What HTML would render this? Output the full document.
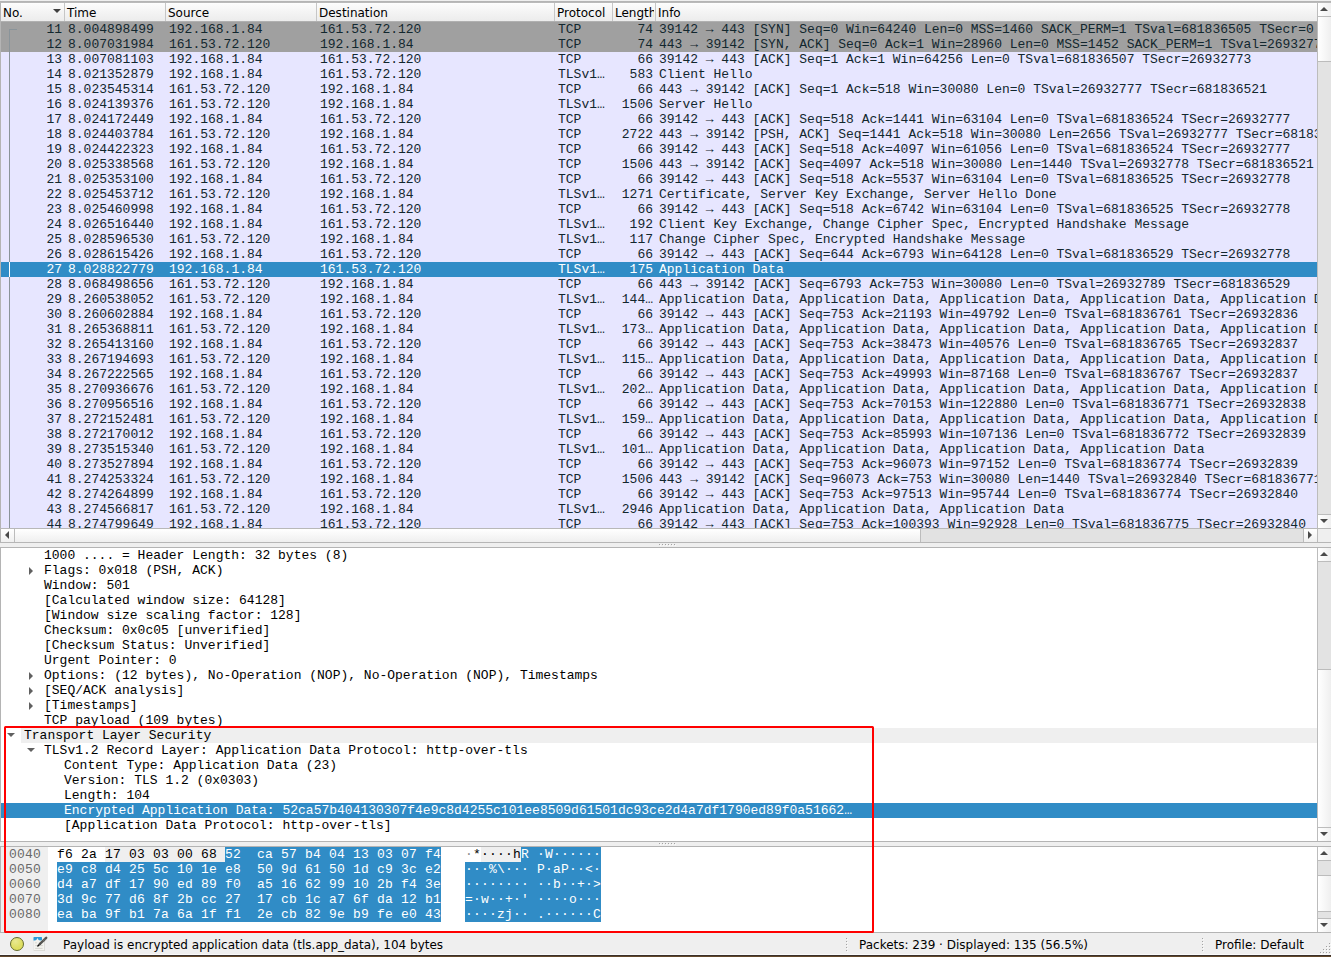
<!DOCTYPE html>
<html lang="en"><head><meta charset="utf-8"><title>Wireshark</title>
<style>
html,body{margin:0;padding:0;}
body{width:1331px;height:957px;overflow:hidden;background:#efefef;}
#app{position:relative;width:1331px;height:957px;overflow:hidden;background:#efefef;font-family:"Liberation Mono","DejaVu Sans Mono",monospace;font-size:13px;line-height:15px;color:#000;}
#app div,#app span,#app i,#app b,#app em{box-sizing:border-box;}
i,b,em{font-style:normal;font-weight:normal;}
/* packet list */
#plist{position:absolute;left:0;top:0;width:1331px;height:543px;}
#plist:before{content:"";position:absolute;left:0;top:1px;width:1331px;height:2px;background:linear-gradient(#b2b2b2,#bcbcbc);}
#plist:after{content:"";position:absolute;left:0;top:542px;width:1331px;height:1px;background:#b6b6b6;}
#pl_l{position:absolute;left:0;top:3px;width:1px;height:540px;background:#b4b4b4;}
#pl_b{position:absolute;left:0;top:528px;width:1331px;height:1px;background:#b8b8b8;}
#phead{position:absolute;left:0;top:3px;width:1318px;height:19px;border-left:1px solid #b4b4b4;border-bottom:1px solid #b0b0b0;border-right:1px solid #b8b8b8;background:#c6c6c6;font-family:"DejaVu Sans","Liberation Sans",sans-serif;font-size:12px;}
.hc{position:absolute;top:0;height:18px;background:linear-gradient(#ffffff 0,#fbfbfb 1px,#ececec 100%);border-right:0;overflow:hidden;white-space:nowrap;}
.hc:after{content:"";position:absolute;right:0;top:0;width:0;height:18px;}
.hc span{position:absolute;left:2px;top:2px;line-height:16px;color:#000;}
#phead .hc{box-shadow:none;}
.sortarrow{position:absolute;left:52px;top:6px;width:0;height:0;border-left:4px solid transparent;border-right:4px solid transparent;border-top:4.5px solid #404040;}
.fade{position:absolute;right:0;top:0;width:8px;height:18px;background:linear-gradient(90deg,rgba(245,245,245,0),rgba(245,245,245,1));}
#prows{position:absolute;left:0;top:22px;width:1318px;height:506px;overflow:hidden;border-left:1px solid #b4b4b4;border-right:1px solid #b8b8b8;background:#e7e6ff;}
.pr{position:absolute;left:0;width:1316px;height:15px;background:#e7e6ff;color:#12272e;white-space:pre;overflow:hidden;}
.pr.g{background:#a0a0a0;}
.pr.s{background:#308cc6;color:#fff;}
.pr span{position:absolute;top:0;height:15px;line-height:15px;overflow:hidden;}
.c1{left:0;width:61px;text-align:right;}
.c2{left:67px;}
.c3{left:168px;}
.c4{left:319px;}
.c5{left:557px;}
.c6{left:612px;width:40px;text-align:right;}
.c7{left:658px;width:658px;letter-spacing:-0.007px;}
#rel1{position:absolute;left:8px;top:7px;width:1px;height:500px;background:#8a949a;}
#rel2{position:absolute;left:8px;top:7px;width:8px;height:1px;background:#8a949a;}
#rel3{position:absolute;left:8px;top:240px;width:1px;height:15px;background:#fff;}
/* scrollbars */
.vsb{position:absolute;left:1317px;width:14px;border-left:1px solid #bcbcbc;background:#e3e3e3;}
.vsb div{position:absolute;left:0;width:13px;}
.vsb .btn{background:linear-gradient(90deg,#ffffff,#f0f0f0);}
.vsb .handle{background:linear-gradient(90deg,#ffffff,#efefef);}
.vsb .hl{height:1px;background:#bcbcbc;}
.au,.ad,.al,.ar{position:absolute;width:0;height:0;}
.au{left:2px;top:4px;border-left:4.5px solid transparent;border-right:4.5px solid transparent;border-bottom:4.5px solid #4a4a4a;}
.ad{left:2px;top:4px;border-left:4.5px solid transparent;border-right:4.5px solid transparent;border-top:4.5px solid #4a4a4a;}
.al{left:4px;top:2px;border-top:4.5px solid transparent;border-bottom:4.5px solid transparent;border-right:4.5px solid #4a4a4a;}
.ar{left:4px;top:2px;border-top:4.5px solid transparent;border-bottom:4.5px solid transparent;border-left:4.5px solid #4a4a4a;}
.hsb{position:absolute;height:13px;background:#e2e2e2;}
.hsb div{position:absolute;top:0;height:13px;}
.hsb .btnh{background:linear-gradient(#ffffff,#f0f0f0);}
.hsb .handleh{background:linear-gradient(#ffffff,#efefef);}
.hsb .vl{width:1px;background:#bcbcbc;}
.corner{position:absolute;background:#efefef;border-left:1px solid #bcbcbc;}
.grip{position:absolute;width:18px;height:2px;background-image:linear-gradient(90deg,#a2a2a2 1px,transparent 1px),linear-gradient(90deg,transparent 1px,#fbfbfb 1px,#fbfbfb 2px,transparent 2px);background-size:3px 1px,3px 1px;background-position:0 0,0 1px;background-repeat:repeat-x;}
/* details */
#dpane{position:absolute;left:0;top:547px;width:1331px;height:295px;border:1px solid #b4b4b4;border-right:0;background:#fff;}
#drows{position:absolute;left:0;top:0;width:1316px;height:293px;overflow:hidden;}
.dr{position:absolute;left:0;width:1316px;height:15px;white-space:pre;}
.dr span{position:absolute;top:0;line-height:15px;}
.dr.sel{background:#308cc6;color:#fff;}
.bgtop{position:absolute;left:20px;top:0;width:1296px;height:15px;background:#efefef;}
.tr{position:absolute;top:3.5px;width:0;height:0;border-top:4px solid transparent;border-bottom:4px solid transparent;border-left:4.5px solid #606060;}
.td{position:absolute;top:5px;width:0;height:0;border-left:4px solid transparent;border-right:4px solid transparent;border-top:4.5px solid #606060;}
/* hex */
#hpane{position:absolute;left:0;top:846px;width:1331px;height:87px;border:1px solid #b4b4b4;border-right:0;background:#fff;}
#hoff{position:absolute;left:0;top:0;width:47px;height:85px;background:#efefef;}
.hr{position:absolute;left:0;width:1316px;height:15px;white-space:pre;letter-spacing:0.2px;}
.hr span{position:absolute;top:0;line-height:15px;height:15px;}
.ho{left:8px;color:#6a6a6a;}
.dim{color:#8c8c8c;}
.hx{left:56px;}
.ha{left:464px;}
.hs{background:#308cc6;color:#fff;display:inline-block;height:15px;}
.pl,.pa{background:#efefef;display:inline-block;height:15px;}
/* red box */
#redbox{position:absolute;left:4px;top:726px;width:870px;height:207px;border:2px solid #ff0000;border-radius:1.5px;}
/* status bar */
#status{position:absolute;left:0;top:933px;width:1331px;height:21px;background:#efefef;font-family:"DejaVu Sans","Liberation Sans",sans-serif;font-size:12px;color:#000;}
#status span{position:absolute;top:4px;line-height:16px;white-space:nowrap;}
#led{position:absolute;left:10px;top:4px;width:14px;height:14px;border-radius:50%;border:1px solid #636b2a;background:radial-gradient(circle at 38% 28%,#e9e992,#dede62 60%,#e0e058);}
#edicon{position:absolute;left:30px;top:1px;}
#st1{left:63px;}
#st2{left:859px;}
#st3{left:1215px;}
.vdots{position:absolute;top:5px;width:2px;height:15px;background-image:linear-gradient(#a4a4a4 1px,transparent 1px),linear-gradient(#fbfbfb 1px,transparent 1px);background-size:1px 3px,1px 3px;background-position:0 0,1px 1px;background-repeat:repeat-y;}
#sizegrip{position:absolute;left:1318px;top:9px;}
#bottom1{position:absolute;left:0;top:954px;width:1331px;height:1px;background:#fafafa;}
#bottom2{position:absolute;left:0;top:955px;width:1331px;height:2px;background:linear-gradient(#3a302b 50%,#63482a 50%);}

</style></head>
<body>
<div id="app">
<div id="plist">
<div id="phead"><div class="hc" style="left:0px;width:63px"><span>No.</span><i class="sortarrow"></i></div><div class="hc" style="left:64px;width:100px"><span>Time</span></div><div class="hc" style="left:165px;width:150px"><span>Source</span></div><div class="hc" style="left:316px;width:237px"><span>Destination</span></div><div class="hc" style="left:554px;width:57px"><span>Protocol</span></div><div class="hc" style="left:612px;width:42px"><span style="width:39px;overflow:hidden">Length</span></div><div class="hc last" style="left:655px;width:661px"><span>Info</span></div></div>
<div id="prows">
<div class="pr g" style="top:0px"><span class="c1">11</span><span class="c2">8.004898499</span><span class="c3">192.168.1.84</span><span class="c4">161.53.72.120</span><span class="c5">TCP</span><span class="c6">74</span><span class="c7">39142 → 443 [SYN] Seq=0 Win=64240 Len=0 MSS=1460 SACK_PERM=1 TSval=681836505 TSecr=0 WS=128</span></div>
<div class="pr g" style="top:15px"><span class="c1">12</span><span class="c2">8.007031984</span><span class="c3">161.53.72.120</span><span class="c4">192.168.1.84</span><span class="c5">TCP</span><span class="c6">74</span><span class="c7">443 → 39142 [SYN, ACK] Seq=0 Ack=1 Win=28960 Len=0 MSS=1452 SACK_PERM=1 TSval=26932773 TSecr=681836505 WS=128</span></div>
<div class="pr " style="top:30px"><span class="c1">13</span><span class="c2">8.007081103</span><span class="c3">192.168.1.84</span><span class="c4">161.53.72.120</span><span class="c5">TCP</span><span class="c6">66</span><span class="c7">39142 → 443 [ACK] Seq=1 Ack=1 Win=64256 Len=0 TSval=681836507 TSecr=26932773</span></div>
<div class="pr " style="top:45px"><span class="c1">14</span><span class="c2">8.021352879</span><span class="c3">192.168.1.84</span><span class="c4">161.53.72.120</span><span class="c5">TLSv1…</span><span class="c6">583</span><span class="c7">Client Hello</span></div>
<div class="pr " style="top:60px"><span class="c1">15</span><span class="c2">8.023545314</span><span class="c3">161.53.72.120</span><span class="c4">192.168.1.84</span><span class="c5">TCP</span><span class="c6">66</span><span class="c7">443 → 39142 [ACK] Seq=1 Ack=518 Win=30080 Len=0 TSval=26932777 TSecr=681836521</span></div>
<div class="pr " style="top:75px"><span class="c1">16</span><span class="c2">8.024139376</span><span class="c3">161.53.72.120</span><span class="c4">192.168.1.84</span><span class="c5">TLSv1…</span><span class="c6">1506</span><span class="c7">Server Hello</span></div>
<div class="pr " style="top:90px"><span class="c1">17</span><span class="c2">8.024172449</span><span class="c3">192.168.1.84</span><span class="c4">161.53.72.120</span><span class="c5">TCP</span><span class="c6">66</span><span class="c7">39142 → 443 [ACK] Seq=518 Ack=1441 Win=63104 Len=0 TSval=681836524 TSecr=26932777</span></div>
<div class="pr " style="top:105px"><span class="c1">18</span><span class="c2">8.024403784</span><span class="c3">161.53.72.120</span><span class="c4">192.168.1.84</span><span class="c5">TCP</span><span class="c6">2722</span><span class="c7">443 → 39142 [PSH, ACK] Seq=1441 Ack=518 Win=30080 Len=2656 TSval=26932777 TSecr=681836524 [TCP segment of a reassembled PDU]</span></div>
<div class="pr " style="top:120px"><span class="c1">19</span><span class="c2">8.024422323</span><span class="c3">192.168.1.84</span><span class="c4">161.53.72.120</span><span class="c5">TCP</span><span class="c6">66</span><span class="c7">39142 → 443 [ACK] Seq=518 Ack=4097 Win=61056 Len=0 TSval=681836524 TSecr=26932777</span></div>
<div class="pr " style="top:135px"><span class="c1">20</span><span class="c2">8.025338568</span><span class="c3">161.53.72.120</span><span class="c4">192.168.1.84</span><span class="c5">TCP</span><span class="c6">1506</span><span class="c7">443 → 39142 [ACK] Seq=4097 Ack=518 Win=30080 Len=1440 TSval=26932778 TSecr=681836521 [TCP segment of a reassembled PDU]</span></div>
<div class="pr " style="top:150px"><span class="c1">21</span><span class="c2">8.025353100</span><span class="c3">192.168.1.84</span><span class="c4">161.53.72.120</span><span class="c5">TCP</span><span class="c6">66</span><span class="c7">39142 → 443 [ACK] Seq=518 Ack=5537 Win=63104 Len=0 TSval=681836525 TSecr=26932778</span></div>
<div class="pr " style="top:165px"><span class="c1">22</span><span class="c2">8.025453712</span><span class="c3">161.53.72.120</span><span class="c4">192.168.1.84</span><span class="c5">TLSv1…</span><span class="c6">1271</span><span class="c7">Certificate, Server Key Exchange, Server Hello Done</span></div>
<div class="pr " style="top:180px"><span class="c1">23</span><span class="c2">8.025460998</span><span class="c3">192.168.1.84</span><span class="c4">161.53.72.120</span><span class="c5">TCP</span><span class="c6">66</span><span class="c7">39142 → 443 [ACK] Seq=518 Ack=6742 Win=63104 Len=0 TSval=681836525 TSecr=26932778</span></div>
<div class="pr " style="top:195px"><span class="c1">24</span><span class="c2">8.026516440</span><span class="c3">192.168.1.84</span><span class="c4">161.53.72.120</span><span class="c5">TLSv1…</span><span class="c6">192</span><span class="c7">Client Key Exchange, Change Cipher Spec, Encrypted Handshake Message</span></div>
<div class="pr " style="top:210px"><span class="c1">25</span><span class="c2">8.028596530</span><span class="c3">161.53.72.120</span><span class="c4">192.168.1.84</span><span class="c5">TLSv1…</span><span class="c6">117</span><span class="c7">Change Cipher Spec, Encrypted Handshake Message</span></div>
<div class="pr " style="top:225px"><span class="c1">26</span><span class="c2">8.028615426</span><span class="c3">192.168.1.84</span><span class="c4">161.53.72.120</span><span class="c5">TCP</span><span class="c6">66</span><span class="c7">39142 → 443 [ACK] Seq=644 Ack=6793 Win=64128 Len=0 TSval=681836529 TSecr=26932778</span></div>
<div class="pr s" style="top:240px"><span class="c1">27</span><span class="c2">8.028822779</span><span class="c3">192.168.1.84</span><span class="c4">161.53.72.120</span><span class="c5">TLSv1…</span><span class="c6">175</span><span class="c7">Application Data</span></div>
<div class="pr " style="top:255px"><span class="c1">28</span><span class="c2">8.068498656</span><span class="c3">161.53.72.120</span><span class="c4">192.168.1.84</span><span class="c5">TCP</span><span class="c6">66</span><span class="c7">443 → 39142 [ACK] Seq=6793 Ack=753 Win=30080 Len=0 TSval=26932789 TSecr=681836529</span></div>
<div class="pr " style="top:270px"><span class="c1">29</span><span class="c2">8.260538052</span><span class="c3">161.53.72.120</span><span class="c4">192.168.1.84</span><span class="c5">TLSv1…</span><span class="c6">144…</span><span class="c7">Application Data, Application Data, Application Data, Application Data, Application Data, Application Data</span></div>
<div class="pr " style="top:285px"><span class="c1">30</span><span class="c2">8.260602884</span><span class="c3">192.168.1.84</span><span class="c4">161.53.72.120</span><span class="c5">TCP</span><span class="c6">66</span><span class="c7">39142 → 443 [ACK] Seq=753 Ack=21193 Win=49792 Len=0 TSval=681836761 TSecr=26932836</span></div>
<div class="pr " style="top:300px"><span class="c1">31</span><span class="c2">8.265368811</span><span class="c3">161.53.72.120</span><span class="c4">192.168.1.84</span><span class="c5">TLSv1…</span><span class="c6">173…</span><span class="c7">Application Data, Application Data, Application Data, Application Data, Application Data, Application Data</span></div>
<div class="pr " style="top:315px"><span class="c1">32</span><span class="c2">8.265413160</span><span class="c3">192.168.1.84</span><span class="c4">161.53.72.120</span><span class="c5">TCP</span><span class="c6">66</span><span class="c7">39142 → 443 [ACK] Seq=753 Ack=38473 Win=40576 Len=0 TSval=681836765 TSecr=26932837</span></div>
<div class="pr " style="top:330px"><span class="c1">33</span><span class="c2">8.267194693</span><span class="c3">161.53.72.120</span><span class="c4">192.168.1.84</span><span class="c5">TLSv1…</span><span class="c6">115…</span><span class="c7">Application Data, Application Data, Application Data, Application Data, Application Data, Application Data</span></div>
<div class="pr " style="top:345px"><span class="c1">34</span><span class="c2">8.267222565</span><span class="c3">192.168.1.84</span><span class="c4">161.53.72.120</span><span class="c5">TCP</span><span class="c6">66</span><span class="c7">39142 → 443 [ACK] Seq=753 Ack=49993 Win=87168 Len=0 TSval=681836767 TSecr=26932837</span></div>
<div class="pr " style="top:360px"><span class="c1">35</span><span class="c2">8.270936676</span><span class="c3">161.53.72.120</span><span class="c4">192.168.1.84</span><span class="c5">TLSv1…</span><span class="c6">202…</span><span class="c7">Application Data, Application Data, Application Data, Application Data, Application Data, Application Data</span></div>
<div class="pr " style="top:375px"><span class="c1">36</span><span class="c2">8.270956516</span><span class="c3">192.168.1.84</span><span class="c4">161.53.72.120</span><span class="c5">TCP</span><span class="c6">66</span><span class="c7">39142 → 443 [ACK] Seq=753 Ack=70153 Win=122880 Len=0 TSval=681836771 TSecr=26932838</span></div>
<div class="pr " style="top:390px"><span class="c1">37</span><span class="c2">8.272152481</span><span class="c3">161.53.72.120</span><span class="c4">192.168.1.84</span><span class="c5">TLSv1…</span><span class="c6">159…</span><span class="c7">Application Data, Application Data, Application Data, Application Data, Application Data, Application Data</span></div>
<div class="pr " style="top:405px"><span class="c1">38</span><span class="c2">8.272170012</span><span class="c3">192.168.1.84</span><span class="c4">161.53.72.120</span><span class="c5">TCP</span><span class="c6">66</span><span class="c7">39142 → 443 [ACK] Seq=753 Ack=85993 Win=107136 Len=0 TSval=681836772 TSecr=26932839</span></div>
<div class="pr " style="top:420px"><span class="c1">39</span><span class="c2">8.273515340</span><span class="c3">161.53.72.120</span><span class="c4">192.168.1.84</span><span class="c5">TLSv1…</span><span class="c6">101…</span><span class="c7">Application Data, Application Data, Application Data, Application Data</span></div>
<div class="pr " style="top:435px"><span class="c1">40</span><span class="c2">8.273527894</span><span class="c3">192.168.1.84</span><span class="c4">161.53.72.120</span><span class="c5">TCP</span><span class="c6">66</span><span class="c7">39142 → 443 [ACK] Seq=753 Ack=96073 Win=97152 Len=0 TSval=681836774 TSecr=26932839</span></div>
<div class="pr " style="top:450px"><span class="c1">41</span><span class="c2">8.274253324</span><span class="c3">161.53.72.120</span><span class="c4">192.168.1.84</span><span class="c5">TCP</span><span class="c6">1506</span><span class="c7">443 → 39142 [ACK] Seq=96073 Ack=753 Win=30080 Len=1440 TSval=26932840 TSecr=681836771 [TCP segment of a reassembled PDU]</span></div>
<div class="pr " style="top:465px"><span class="c1">42</span><span class="c2">8.274264899</span><span class="c3">192.168.1.84</span><span class="c4">161.53.72.120</span><span class="c5">TCP</span><span class="c6">66</span><span class="c7">39142 → 443 [ACK] Seq=753 Ack=97513 Win=95744 Len=0 TSval=681836774 TSecr=26932840</span></div>
<div class="pr " style="top:480px"><span class="c1">43</span><span class="c2">8.274566817</span><span class="c3">161.53.72.120</span><span class="c4">192.168.1.84</span><span class="c5">TLSv1…</span><span class="c6">2946</span><span class="c7">Application Data, Application Data, Application Data</span></div>
<div class="pr " style="top:495px"><span class="c1">44</span><span class="c2">8.274799649</span><span class="c3">192.168.1.84</span><span class="c4">161.53.72.120</span><span class="c5">TCP</span><span class="c6">66</span><span class="c7">39142 → 443 [ACK] Seq=753 Ack=100393 Win=92928 Len=0 TSval=681836775 TSecr=26932840</span></div>
<div id="rel1"></div><div id="rel2"></div><div id="rel3"></div>
</div>
<div class="vsb" style="top:3px;height:525px"><div class="btn" style="top:0;height:13px"><i class="au"></i></div><div class="hl" style="top:13px"></div><div class="handle" style="top:14px;height:44px"></div><div class="hl" style="top:58px"></div><div class="hl" style="top:511px"></div><div class="btn" style="top:512px;height:13px"><i class="ad"></i></div></div>
<div class="hsb" style="top:529px;left:1px;width:1316px"><div class="btnh" style="left:0;width:13px"><i class="al"></i></div><div class="vl" style="left:13px"></div><div class="handleh" style="left:14px;width:905px"></div><div class="vl" style="left:919px"></div><div class="vl" style="left:1302px"></div><div class="btnh" style="left:1303px;width:13px"><i class="ar"></i></div></div>
<div id="pl_l"></div><div id="pl_b"></div><div class="corner" style="top:529px;left:1317px;width:14px;height:13px"></div>
</div>
<div class="grip" style="top:544px;left:659px"></div>
<div id="dpane">
<div id="drows">
<div class="dr " style="top:0px"><span style="left:43px">1000 .... = Header Length: 32 bytes (8)</span></div>
<div class="dr " style="top:15px"><i class="tr" style="left:28px"></i><span style="left:43px">Flags: 0x018 (PSH, ACK)</span></div>
<div class="dr " style="top:30px"><span style="left:43px">Window: 501</span></div>
<div class="dr " style="top:45px"><span style="left:43px">[Calculated window size: 64128]</span></div>
<div class="dr " style="top:60px"><span style="left:43px">[Window size scaling factor: 128]</span></div>
<div class="dr " style="top:75px"><span style="left:43px">Checksum: 0x0c05 [unverified]</span></div>
<div class="dr " style="top:90px"><span style="left:43px">[Checksum Status: Unverified]</span></div>
<div class="dr " style="top:105px"><span style="left:43px">Urgent Pointer: 0</span></div>
<div class="dr " style="top:120px"><i class="tr" style="left:28px"></i><span style="left:43px">Options: (12 bytes), No-Operation (NOP), No-Operation (NOP), Timestamps</span></div>
<div class="dr " style="top:135px"><i class="tr" style="left:28px"></i><span style="left:43px">[SEQ/ACK analysis]</span></div>
<div class="dr " style="top:150px"><i class="tr" style="left:28px"></i><span style="left:43px">[Timestamps]</span></div>
<div class="dr " style="top:165px"><span style="left:43px">TCP payload (109 bytes)</span></div>
<div class="dr top" style="top:180px"><b class="bgtop"></b><i class="td" style="left:6px"></i><span style="left:23px">Transport Layer Security</span></div>
<div class="dr " style="top:195px"><i class="td" style="left:26px"></i><span style="left:43px">TLSv1.2 Record Layer: Application Data Protocol: http-over-tls</span></div>
<div class="dr " style="top:210px"><span style="left:63px">Content Type: Application Data (23)</span></div>
<div class="dr " style="top:225px"><span style="left:63px">Version: TLS 1.2 (0x0303)</span></div>
<div class="dr " style="top:240px"><span style="left:63px">Length: 104</span></div>
<div class="dr sel" style="top:255px"><span style="left:63px">Encrypted Application Data: 52ca57b404130307f4e9c8d4255c101ee8509d61501dc93ce2d4a7df1790ed89f0a51662…</span></div>
<div class="dr " style="top:270px"><span style="left:63px">[Application Data Protocol: http-over-tls]</span></div>
</div>
<div class="vsb" style="top:0px;left:1316px;height:293px"><div class="btn" style="top:0;height:13px"><i class="au"></i></div><div class="hl" style="top:13px"></div><div class="hl" style="top:121px"></div><div class="handle" style="top:122px;height:157px"></div><div class="hl" style="top:279px"></div><div class="btn" style="top:280px;height:13px"><i class="ad"></i></div></div>
</div>
<div class="grip" style="top:843px;left:659px"></div>
<div id="hpane">
<div id="hoff"></div>
<div class="hr" style="top:0px"><span class="ho">0040</span><span class="hx">f6 2a <em class="pl">17 03 03 00 68 </em><em class="hs">52  ca 57 b4 04 13 03 07 f4</em></span><span class="ha"><em class="dim">·</em>*<em class="pa">····h</em><em class="hs">R ·W······</em></span></div>
<div class="hr" style="top:15px"><span class="ho">0050</span><span class="hx"><em class="hs">e9 c8 d4 25 5c 10 1e e8  50 9d 61 50 1d c9 3c e2</em></span><span class="ha"><em class="hs">···%\··· P·aP··&lt;·</em></span></div>
<div class="hr" style="top:30px"><span class="ho">0060</span><span class="hx"><em class="hs">d4 a7 df 17 90 ed 89 f0  a5 16 62 99 10 2b f4 3e</em></span><span class="ha"><em class="hs">········ ··b··+·&gt;</em></span></div>
<div class="hr" style="top:45px"><span class="ho">0070</span><span class="hx"><em class="hs">3d 9c 77 d6 8f 2b cc 27  17 cb 1c a7 6f da 12 b1</em></span><span class="ha"><em class="hs">=·w··+·&#x27; ····o···</em></span></div>
<div class="hr" style="top:60px"><span class="ho">0080</span><span class="hx"><em class="hs">ea ba 9f b1 7a 6a 1f f1  2e cb 82 9e b9 fe e0 43</em></span><span class="ha"><em class="hs">····zj·· .······C</em></span></div>
<div class="vsb" style="top:0px;left:1316px;height:85px"><div class="btn" style="top:0;height:13px"><i class="au"></i></div><div class="hl" style="top:13px"></div><div class="hl" style="top:28px"></div><div class="handle" style="top:29px;height:35px"></div><div class="hl" style="top:64px"></div><div class="hl" style="top:71px"></div><div class="btn" style="top:72px;height:13px"><i class="ad"></i></div></div>
</div>
<div id="redbox"></div>
<div id="status"><div id="led"></div><svg id="edicon" width="20" height="20" viewBox="0 0 20 20"><rect x="3.7" y="3" width="11.1" height="13.9" rx="0.6" fill="#c4c4c0"/><rect x="3.6" y="2.8" width="10.8" height="13.6" rx="0.5" fill="#f3f3ef"/><path d="M4.1 3h7.3q.6 0 .6 .6v2.6l-1.6 .3l-1.8-.6l-1.1-1.9l-1.2 2l-1.4 .6l-1.4-.2v-2.8q0-.6 .6-.6z" fill="#2a9bd9"/><path d="M5.2 8.8h1.6M5.2 11.6h7.6M5.2 14.4h7.4" stroke="#cfcfcb" stroke-width="0.9"/><path d="M16.2 3.8L10.2 9.6" stroke="#555552" stroke-width="2.4" stroke-linecap="round"/><path d="M14.2 4.6l1.5 1.6M12.9 5.9l1.5 1.6" stroke="#8a8a86" stroke-width="0.5"/><path d="M9.35 8.75L11.05 10.45L8.3 12.5L7.05 12.7L7.3 11.4z" fill="#4a4a47"/><ellipse cx="8.3" cy="11.6" rx="0.85" ry="0.5" transform="rotate(-40 8.3 11.6)" fill="#000"/></svg><span id="st1">Payload is encrypted application data (tls.app_data), 104 bytes</span><i class="vdots" style="left:846px"></i><span id="st2">Packets: 239 · Displayed: 135 (56.5%)</span><i class="vdots" style="left:1202px"></i><span id="st3">Profile: Default</span><svg id="sizegrip" width="13" height="13" viewBox="0 0 13 13"><rect x="12" y="2" width="1" height="1" fill="#fcfcfc"/><rect x="9" y="5" width="1" height="1" fill="#fcfcfc"/><rect x="12" y="5" width="1" height="1" fill="#fcfcfc"/><rect x="6" y="8" width="1" height="1" fill="#fcfcfc"/><rect x="9" y="8" width="1" height="1" fill="#fcfcfc"/><rect x="12" y="8" width="1" height="1" fill="#fcfcfc"/><rect x="3" y="11" width="1" height="1" fill="#fcfcfc"/><rect x="6" y="11" width="1" height="1" fill="#fcfcfc"/><rect x="9" y="11" width="1" height="1" fill="#fcfcfc"/><rect x="12" y="11" width="1" height="1" fill="#fcfcfc"/><rect x="11" y="1" width="1" height="1" fill="#a0a0a0"/><rect x="8" y="4" width="1" height="1" fill="#a0a0a0"/><rect x="11" y="4" width="1" height="1" fill="#a0a0a0"/><rect x="5" y="7" width="1" height="1" fill="#a0a0a0"/><rect x="8" y="7" width="1" height="1" fill="#a0a0a0"/><rect x="11" y="7" width="1" height="1" fill="#a0a0a0"/><rect x="2" y="10" width="1" height="1" fill="#a0a0a0"/><rect x="5" y="10" width="1" height="1" fill="#a0a0a0"/><rect x="8" y="10" width="1" height="1" fill="#a0a0a0"/><rect x="11" y="10" width="1" height="1" fill="#a0a0a0"/></svg></div>
<div id="bottom1"></div><div id="bottom2"></div>
</div>
</body></html>
